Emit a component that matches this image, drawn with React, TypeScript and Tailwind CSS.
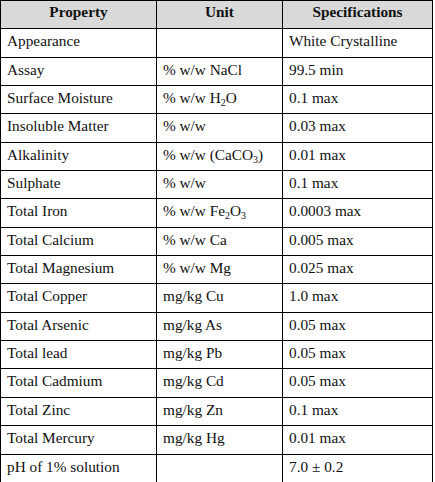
import React from "react";

type Row = { p: string; u: React.ReactNode; s: string };

const sub = "text-[10px] align-baseline relative top-[3px]";

const rows: Row[] = [
  { p: "Appearance", u: "", s: "White Crystalline" },
  { p: "Assay", u: "% w/w NaCl", s: "99.5 min" },
  { p: "Surface Moisture", u: <>% w/w H<sub className={sub}>2</sub>O</>, s: "0.1 max" },
  { p: "Insoluble Matter", u: "% w/w", s: "0.03 max" },
  { p: "Alkalinity", u: <>% w/w (CaCO<sub className={sub}>3</sub>)</>, s: "0.01 max" },
  { p: "Sulphate", u: "% w/w", s: "0.1 max" },
  { p: "Total Iron", u: <>% w/w Fe<sub className={sub}>2</sub>O<sub className={sub}>3</sub></>, s: "0.0003 max" },
  { p: "Total Calcium", u: "% w/w Ca", s: "0.005 max" },
  { p: "Total Magnesium", u: "% w/w Mg", s: "0.025 max" },
  { p: "Total Copper", u: "mg/kg Cu", s: "1.0 max" },
  { p: "Total Arsenic", u: "mg/kg As", s: "0.05 max" },
  { p: "Total lead", u: "mg/kg Pb", s: "0.05 max" },
  { p: "Total Cadmium", u: "mg/kg Cd", s: "0.05 max" },
  { p: "Total Zinc", u: "mg/kg Zn", s: "0.1 max" },
  { p: "Total Mercury", u: "mg/kg Hg", s: "0.01 max" },
  { p: "pH of 1% solution", u: "", s: "7.0 ± 0.2" },
];

export default function App() {
  const cell = "border border-black align-top pt-[3px] px-[6px] text-left font-normal h-[28.35px]";
  const head = "border border-black align-top pt-[2px] text-center font-bold h-[28.35px]";
  return (
    <div className="w-[435px] h-[482px] bg-white">
      <table
        className="w-[432px] border-collapse table-fixed text-[15.3px] leading-[17px] text-[#111]"
        style={{ fontFamily: '"Liberation Serif", "Times New Roman", serif' }}
      >
        <colgroup>
          <col className="w-[156px]" />
          <col className="w-[126px]" />
          <col className="w-[150px]" />
        </colgroup>
        <thead>
          <tr className="bg-[#d9d9d9]">
            <th className={head}>Property</th>
            <th className={head}>Unit</th>
            <th className={head}>Specifications</th>
          </tr>
        </thead>
        <tbody>
          {rows.map((r, i) => (
            <tr key={i}>
              <td className={cell}>{r.p}</td>
              <td className={cell}>{r.u}</td>
              <td className={cell}>{r.s}</td>
            </tr>
          ))}
        </tbody>
      </table>
    </div>
  );
}
